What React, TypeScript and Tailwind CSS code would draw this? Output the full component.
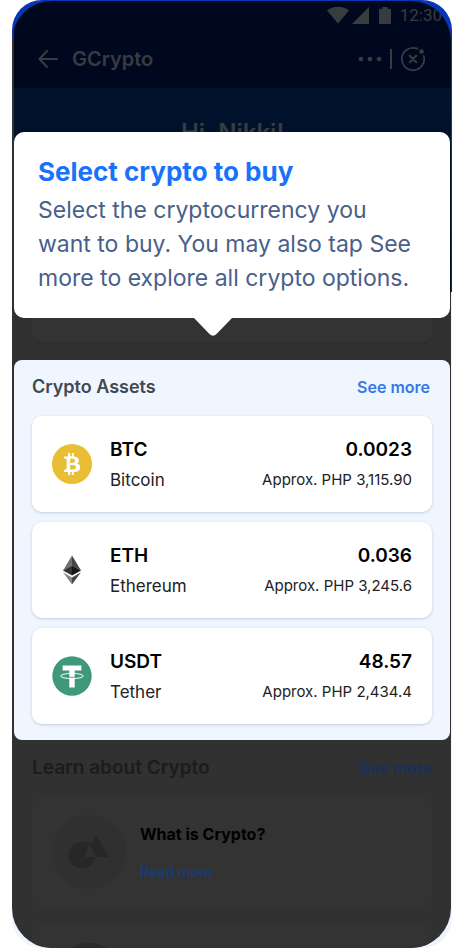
import type { ReactNode } from "react";
import { FaBtc } from "react-icons/fa";

function BitcoinIcon() {
  return (
    <span className="flex size-10 shrink-0 items-center justify-center rounded-full bg-[#e9bd34] text-white">
      <FaBtc size={22} aria-hidden="true" />
    </span>
  );
}

function EthereumIcon() {
  return (
    <svg viewBox="0 0 40 40" className="size-10 shrink-0" aria-hidden="true">
      <path d="M20 5.500 11 20.500 20 15.500z" fill="#707070" />
      <path d="M20 5.500 29 20.500 20 15.500z" fill="#444" />
      <path d="M11 20.500 20 15.500V25.500z" fill="#333" />
      <path d="M29 20.500 20 15.500V25.500z" fill="#171717" />
      <path d="M11 22.300 20 27.400V34.500z" fill="#858585" />
      <path d="M29 22.300 20 27.400V34.500z" fill="#484848" />
    </svg>
  );
}

function TetherIcon() {
  return (
    <svg viewBox="0 0 40 40" className="size-10 shrink-0" aria-hidden="true">
      <circle cx="20" cy="20" r="19.700" fill="#3f9878" />
      <path d="M10.600 9.500h18.800v5H22.700v17h-5.400v-17h-6.700z" fill="#fff" />
      <ellipse cx="20" cy="20" rx="11.300" ry="2.600" fill="none" stroke="#fff" strokeWidth="1" />
      <path d="M17.300 21.300c1.700.2 3.700.2 5.400 0" fill="none" stroke="#3f9878" strokeWidth=".8" />
    </svg>
  );
}

type Asset = {
  symbol: string;
  name: string;
  amount: string;
  value: string;
  icon: ReactNode;
};

const assets: Asset[] = [
  { symbol: "BTC", name: "Bitcoin", amount: "0.0023", value: "3,115.90", icon: <BitcoinIcon /> },
  { symbol: "ETH", name: "Ethereum", amount: "0.036", value: "3,245.6", icon: <EthereumIcon /> },
  { symbol: "USDT", name: "Tether", amount: "48.57", value: "2,434.4", icon: <TetherIcon /> },
];

function StatusBar() {
  return (
    <div className="flex h-[28px] items-center justify-end pr-[9px] text-[#383c3e]">
      <svg viewBox="0 0 22 18" className="mr-[3px] h-[18px] w-[22px]" fill="currentColor" aria-hidden="true">
        <path d="M0 4.500C6-.4 16-.4 22 4.500L11 17.500z" />
      </svg>
      <svg viewBox="0 0 17 17" className="mr-[10px] size-[17px]" fill="currentColor" aria-hidden="true">
        <path d="M17 0v17H0z" />
      </svg>
      <svg viewBox="0 0 12 17" className="mr-[9px] h-[17px] w-3" fill="currentColor" aria-hidden="true">
        <path d="M3.500 0h5v1.800H11q1 0 1 1V16q0 1-1 1H1q-1 0-1-1V2.800q0-1 1-1h2.500z" />
      </svg>
      <span className="font-['Roboto',sans-serif] text-[17px] leading-5">12:30</span>
    </div>
  );
}

function AppBar() {
  return (
    <header className="flex h-[59px] items-center pr-[25px] pl-6 text-[#383c3e]">
      <button type="button" aria-label="Back" className="mr-[14px]">
        <svg viewBox="0 0 20 18" className="h-[18px] w-5" fill="none" stroke="currentColor" strokeWidth="2" strokeLinecap="round" strokeLinejoin="round">
          <path d="M9 1 1.500 9 9 17M1.500 9H19" />
        </svg>
      </button>
      <h1 className="flex-1 text-xl leading-6 font-semibold">GCrypto</h1>
      <button type="button" aria-label="More options">
        <svg viewBox="0 0 24 6" className="h-[6px] w-6" fill="currentColor">
          <circle cx="3" cy="3" r="2.300" />
          <circle cx="12" cy="3" r="2.300" />
          <circle cx="21" cy="3" r="2.300" />
        </svg>
      </button>
      <span className="mx-2 h-5 w-[2px] bg-current" />
      <button type="button" aria-label="Close">
        <svg viewBox="0 0 26 26" className="size-[26px]" fill="none" stroke="currentColor" strokeWidth="1.800" strokeLinecap="round">
          <path d="M17.300 2.700A11.200 11.200 0 1 0 23.800 10" />
          <path d="M9.800 9.800l6.400 6.400M16.200 9.800l-6.400 6.400" strokeWidth="2.200" />
          <circle cx="21.500" cy="5.500" r="2.300" fill="currentColor" stroke="none" />
        </svg>
      </button>
    </header>
  );
}

function Coachmark() {
  return (
    <div role="dialog" aria-labelledby="coach-title" className="absolute inset-x-0 bottom-full mb-[42px] rounded-[10px] bg-white px-6 pt-[23px] pb-[23px]">
      <h2 id="coach-title" className="text-[26px] leading-[34px] font-bold text-[#1972f9]">
        Select crypto to buy
      </h2>
      <p className="mt-1 pr-2 text-[23px] leading-[34px] text-[#48608a]">
        Select the cryptocurrency you want to buy. You may also tap See more to explore all crypto options.
      </p>
      <svg viewBox="0 0 38 18" className="absolute top-full left-[180px] h-[18px] w-[38px]" fill="#fff" aria-hidden="true">
        <path d="M0 0H38L22.500 16Q19 19.500 15.500 16z" />
      </svg>
    </div>
  );
}

function AssetCard({ asset }: { asset: Asset }) {
  return (
    <li className="flex h-24 items-center gap-[18px] rounded-[10px] bg-white px-5 shadow-[0_1px_3px_rgba(60,80,120,0.25)]">
      {asset.icon}
      <div className="flex-1 pt-px">
        <h3 className="text-[19px] leading-[30px] font-semibold text-black">{asset.symbol}</h3>
        <p className="text-[17px] leading-[30px] text-[#222]">{asset.name}</p>
      </div>
      <div className="pt-px text-right">
        <p className="text-[19px] leading-[30px] font-semibold text-black">{asset.amount}</p>
        <p className="text-[15px] leading-[30px] text-[#222]">Approx. PHP {asset.value}</p>
      </div>
    </li>
  );
}

export default function App() {
  return (
    <div className="bg-white px-3 font-['Inter',sans-serif]">
      <div className="rounded-[30px] bg-[linear-gradient(#0736b8_0,#0736b8_100px,#052c70_292px,#eef3ff_292px)] pt-px pr-px">
        <main className="overflow-hidden rounded-[40px] bg-[#313132] pl-[2px]">
          <div className="bg-[#000820]">
            <StatusBar />
            <AppBar />
          </div>
          <div className="relative mb-[18px] bg-[linear-gradient(#00122d_0,#001028_204px,#313132_204px)] pt-[30px]">
            <p className="text-center text-2xl leading-[30px] font-semibold text-[#383c3e]">Hi, Nikki!</p>
            <div className="mx-[18px] mt-[31px] h-[163px] rounded-[10px] bg-[#333] shadow-[0_1px_2px_#2c2c2d]" />
          </div>

          <section aria-labelledby="assets-title" className="relative mr-px rounded-lg bg-[#eff6ff] px-[18px] pt-3 pb-4">
            <Coachmark />
            <div className="flex items-center justify-between pr-[2px]">
              <h2 id="assets-title" className="text-lg leading-[30px] font-semibold text-[#414850]">
                Crypto Assets
              </h2>
              <a href="#assets" className="text-base leading-[30px] font-semibold text-[#3579e6]">
                See more
              </a>
            </div>
            <ul className="mt-[14px] flex flex-col gap-[10px]">
              {assets.map((asset) => (
                <AssetCard key={asset.symbol} asset={asset} />
              ))}
            </ul>
          </section>

          <section aria-labelledby="learn-title" className="mr-px px-[18px] pt-[13px]">
            <div className="flex items-center justify-between">
              <h2 id="learn-title" className="text-[19px] leading-[30px] font-semibold text-[#1b1c1e]">
                Learn about Crypto
              </h2>
              <a href="#learn" className="text-base leading-[30px] font-semibold text-[#16305f]">
                See more
              </a>
            </div>
            <article className="mt-[13px] flex h-28 items-center gap-[14px] rounded-[10px] bg-[#333] px-5">
              <svg viewBox="0 0 74 74" className="size-[74px] shrink-0" aria-hidden="true">
                <circle cx="37" cy="37" r="37" fill="#303031" />
                <path d="M44 20 57 42H43.500A13.500 13.500 0 1 1 37 28.500L39 29z" fill="#272728" />
                <path d="M37 29 44.500 42 32.500 42z" fill="#303031" />
              </svg>
              <div className="pt-px">
                <h3 className="text-base leading-[38px] font-bold text-black">What is Crypto?</h3>
                <a href="#what-is-crypto" className="block text-sm leading-[38px] font-semibold text-[#1a3b74]">
                  Read more
                </a>
              </div>
            </article>
            <div className="mt-4 h-6 overflow-hidden rounded-t-[10px] bg-[#333] px-5 pt-[19px]">
              <div className="size-[74px] rounded-full bg-[#2a2a2b]" />
            </div>
          </section>
        </main>
      </div>
    </div>
  );
}
